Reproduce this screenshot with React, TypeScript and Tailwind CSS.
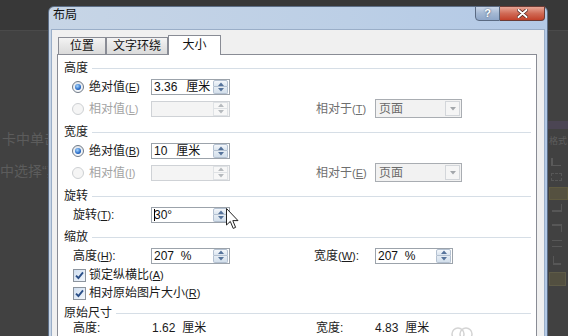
import React from "react";

function Mn({ k }: { k: string }) {
  return (
    <span className="text-[11px]">
      (<span className="underline underline-offset-1">{k}</span>)
    </span>
  );
}

function Up({ c }: { c: string }) {
  return (
    <svg width="6" height="4" viewBox="0 0 6 4">
      <path d="M0 4 L3 0.5 L6 4 Z" fill={c} />
    </svg>
  );
}
function Down({ c }: { c: string }) {
  return (
    <svg width="6" height="4" viewBox="0 0 6 4">
      <path d="M0 0 L3 3.5 L6 0 Z" fill={c} />
    </svg>
  );
}

function Spin({ disabled }: { disabled?: boolean }) {
  if (disabled) {
    return (
      <div className="ml-auto mr-px flex flex-col w-[15px] h-[14px]">
        <div className="h-[7px] flex items-center justify-center border border-[#dfe2e5] bg-[#f7f7f7]">
          <Up c="#b6babe" />
        </div>
        <div className="h-[7px] flex items-center justify-center border border-t-0 border-[#dfe2e5] bg-[#f7f7f7]">
          <Down c="#b6babe" />
        </div>
      </div>
    );
  }
  return (
    <div className="ml-auto mr-px flex flex-col w-[15px] h-[14px]">
      <div className="h-[7px] flex items-center justify-center border border-[#b4c1d1] bg-[linear-gradient(#f4f7fb,#dbe5ef)] rounded-t-[2px]">
        <Up c="#56739b" />
      </div>
      <div className="h-[7px] flex items-center justify-center border border-t-0 border-[#b4c1d1] bg-[linear-gradient(#e6edf4,#d3dfeb)] rounded-b-[2px]">
        <Down c="#56739b" />
      </div>
    </div>
  );
}

function Val({ num, unit }: { num: string; unit?: string }) {
  return (
    <span className="whitespace-pre text-[12px] leading-none text-[#111]">
      {num}
      {unit && <span className="ml-[9px]">{unit}</span>}
    </span>
  );
}

function NumInput({
  num,
  unit,
  disabled,
  caret,
  wide,
}: {
  num?: string;
  unit?: string;
  disabled?: boolean;
  caret?: boolean;
  wide?: boolean;
}) {
  return (
    <div
      className={
        (wide ? "w-[79px] " : "w-[78px] ") +
        (disabled
          ? "border-[#cfd2d6] bg-[#f4f4f4] "
          : "border-[#9ca3ab] bg-white ") +
        "flex items-center h-[16px] border pl-[2px]"
      }
    >
      {caret && <div className="w-px h-[12px] bg-black mr-[-1px]" />}
      {num && <Val num={num} unit={unit} />}
      <Spin disabled={disabled} />
    </div>
  );
}

function Select() {
  return (
    <div className="w-[87px] h-[19px] border border-[#a9adb2] bg-[#f2f2f2] flex items-center">
      <span className="pl-[3px] flex-1 text-[12px] leading-none text-[#6a6a6a]">
        页面
      </span>
      <div className="w-[15px] h-[15px] mr-px border border-[#d3d6da] bg-[#f5f5f5] flex items-center justify-center">
        <Down c="#a3a7ab" />
      </div>
    </div>
  );
}

function Radio({ checked }: { checked?: boolean }) {
  return checked ? (
    <div className="w-[12px] h-[12px] rounded-full border border-[#6f7986] bg-[linear-gradient(#e3e8ee,#f6f8fa)] flex items-center justify-center">
      <div className="w-[6px] h-[6px] rounded-full bg-[radial-gradient(circle_at_40%_35%,#a8d8ff,#2063c2_65%,#0e3b82)]" />
    </div>
  ) : (
    <div className="w-[12px] h-[12px] rounded-full border border-[#cdd0d3] bg-[#f5f5f5]" />
  );
}

function Check() {
  return (
    <div className="w-[13px] h-[13px] border border-[#8c949e] bg-[linear-gradient(135deg,#cfdef0,#f3f7fc)] flex items-center justify-center">
      <svg width="9" height="9" viewBox="0 0 9 9">
        <path
          d="M1 4.6 L3.4 7 L8 1.4"
          fill="none"
          stroke="#2a4f88"
          strokeWidth="1.9"
        />
      </svg>
    </div>
  );
}

function Heading({ text, mt }: { text: string; mt: string }) {
  return (
    <div className={"flex items-center h-[16px] " + mt}>
      <span className="text-[12px] leading-none text-[#1b1b1b]">{text}</span>
      <div className="flex-1 h-px bg-[#d6dee6] ml-[4px]" />
    </div>
  );
}

function Tab({
  label,
  selected,
  w,
}: {
  label: string;
  selected?: boolean;
  w: string;
}) {
  if (selected) {
    return (
      <div
        className={
          w +
          " h-[20px] border border-b-0 border-[#898c95] bg-white flex items-center justify-center text-[12px] leading-none text-[#111] pb-[2px]"
        }
      >
        {label}
      </div>
    );
  }
  return (
    <div
      className={
        w +
        " h-[17px] mb-px border border-b-0 border-[#898c95] bg-[linear-gradient(#f4f4f4,#e6e6e6_50%,#dadada)] flex items-center justify-center text-[12px] leading-none text-[#111]"
      }
    >
      {label}
    </div>
  );
}

const dis = "text-[#a3a3a3]";
const dis2 = "text-[#6e6e6e]";

export default function App() {
  return (
    <div className="relative w-[568px] h-[336px] overflow-hidden bg-[#414141] font-['Liberation_Sans','Noto_Sans_CJK_SC',sans-serif]">
      {/* desktop / document behind */}
      <div className="absolute left-0 top-0 w-[568px] h-[31px] bg-[#383838] border-b border-[#4a4a4a]" />
      <div className="absolute left-[2px] top-[132px] text-[14px] leading-none text-[#5c5c5c] whitespace-nowrap">
        卡中单击
      </div>
      <div className="absolute left-0 top-[164px] text-[14px] leading-none text-[#5c5c5c] whitespace-nowrap">
        中选择“其
      </div>
      {/* right side ribbon remnants */}
      <div className="absolute left-[548px] top-[121px] w-[20px] h-[8px] bg-[#4b4553]" />
      <div className="absolute left-[549px] top-[137px] text-[9px] leading-none text-[#5e5e5e] whitespace-nowrap">
        格式
      </div>
      <div className="absolute left-[551px] top-[158px] w-[10px] h-[8px] border-l-2 border-b border-[#5a5a5a]" />
      <div className="absolute left-[551px] top-[173px] w-[11px] h-[8px] border border-dashed border-[#575757]" />
      <div className="absolute left-[549px] top-[187px] w-[19px] h-[13px] bg-[#555140] border border-[#5f5a40]" />
      <div className="absolute left-[552px] top-[204px] w-[10px] h-[8px] border-b-2 border-r border-[#575757]" />
      <div className="absolute left-[552px] top-[224px] w-[10px] h-[8px] border-t-2 border-r border-[#575757]" />
      <div className="absolute left-[552px] top-[240px] w-[10px] h-[7px] border-y border-[#575757]" />
      <div className="absolute left-[553px] top-[256px] w-[8px] h-[9px] border-b-2 border-l border-[#575757]" />
      <div className="absolute left-[549px] top-[272px] w-[17px] h-[14px] bg-[#524f40] border border-[#5e5b48]" />

      {/* dialog window */}
      <div className="absolute left-[48px] top-[6px] w-[500px] h-[340px] border border-[#5d6e86] rounded-t-[6px] bg-[linear-gradient(90deg,#c7d5e6,#bccfe6_60%,#b3c9e6)] px-[2px] flex flex-col">
        {/* title bar */}
        <div className="h-[22px] flex justify-between">
          <div className="pl-[2px] pt-[2px] text-[12px] leading-[12px] text-[#111]">
            布局
          </div>
          <div className="flex -mt-px">
            <div className="w-[25px] h-[15px] border border-[#5a6a82] rounded-bl-[4px] bg-[linear-gradient(#c9d6e8,#a4b8d3_50%,#8ea6c8)] flex items-center justify-center text-[11px] font-bold leading-none text-white [text-shadow:0_0_2px_#33445c]">
              ?
            </div>
            <div className="w-[45px] h-[15px] border border-l-0 border-[#6b3b35] rounded-br-[4px] bg-[linear-gradient(#e8a595,#d06a55_50%,#c2412a)] flex items-center justify-center">
              <svg width="11" height="9" viewBox="0 0 11 9">
                <path
                  d="M1.5 1 L9.5 8 M9.5 1 L1.5 8"
                  stroke="#4a1d18"
                  strokeWidth="3.4"
                  strokeLinecap="round"
                />
                <path
                  d="M1.5 1 L9.5 8 M9.5 1 L1.5 8"
                  stroke="#ffffff"
                  strokeWidth="2"
                  strokeLinecap="round"
                />
              </svg>
            </div>
          </div>
        </div>

        {/* client area */}
        <div className="flex-1 bg-[#f0f0f0] border border-[#9aaec8] pl-[5px] pr-[7px] pt-[5px] flex flex-col">
          <div className="relative z-10 flex items-end h-[20px] pl-px">
            <Tab label="位置" w="w-[48px]" />
            <Tab label="文字环绕" w="w-[62px]" />
            <Tab label="大小" w="w-[53px]" selected />
          </div>
          <div className="-mt-px flex-1 border border-[#898c95] bg-white pl-[6px] pr-[5px] flex flex-col text-[12px] leading-none text-[#1b1b1b]">
            {/* 高度 */}
            <Heading text="高度" mt="mt-[5px]" />
            <div className="flex items-center h-[22px]">
              <div className="ml-[8px] w-[12px]">
                <Radio checked />
              </div>
              <div className="ml-[5px] w-[62px] whitespace-nowrap">
                绝对值<Mn k="E" />
              </div>
              <NumInput num="3.36" unit="厘米" wide />
            </div>
            <div className="flex items-center h-[21px]">
              <div className="ml-[8px] w-[12px]">
                <Radio />
              </div>
              <div className={"ml-[5px] w-[62px] whitespace-nowrap " + dis}>
                相对值<Mn k="L" />
              </div>
              <NumInput disabled wide />
              <div className="w-[86px]" />
              <div className={"w-[59px] whitespace-nowrap " + dis2}>
                相对于<Mn k="T" />
              </div>
              <Select />
            </div>

            {/* 宽度 */}
            <Heading text="宽度" mt="mt-[5px]" />
            <div className="flex items-center h-[22px]">
              <div className="ml-[8px] w-[12px]">
                <Radio checked />
              </div>
              <div className="ml-[5px] w-[62px] whitespace-nowrap">
                绝对值<Mn k="B" />
              </div>
              <NumInput num="10" unit="厘米" wide />
            </div>
            <div className="flex items-center h-[21px]">
              <div className="ml-[8px] w-[12px]">
                <Radio />
              </div>
              <div className={"ml-[5px] w-[62px] whitespace-nowrap " + dis}>
                相对值<Mn k="I" />
              </div>
              <NumInput disabled wide />
              <div className="w-[86px]" />
              <div className={"w-[59px] whitespace-nowrap " + dis2}>
                相对于<Mn k="E" />
              </div>
              <Select />
            </div>

            {/* 旋转 */}
            <Heading text="旋转" mt="mt-[5px]" />
            <div className="flex items-center h-[22px]">
              <div className="ml-[9px] w-[78px] whitespace-nowrap">
                旋转<Mn k="T" />:
              </div>
              <NumInput num="30°" caret wide />
            </div>

            {/* 缩放 */}
            <Heading text="缩放" mt="mt-[3px]" />
            <div className="flex items-center h-[21px]">
              <div className="ml-[9px] w-[78px] whitespace-nowrap">
                高度<Mn k="H" />:
              </div>
              <NumInput num="207  %" wide />
              <div className="w-[84px]" />
              <div className="w-[61px] whitespace-nowrap">
                宽度<Mn k="W" />:
              </div>
              <NumInput num="207  %" />
            </div>
            <div className="flex items-center h-[18px]">
              <div className="ml-[9px]">
                <Check />
              </div>
              <div className="ml-[3px] whitespace-nowrap">
                锁定纵横比<Mn k="A" />
              </div>
            </div>
            <div className="flex items-center h-[18px]">
              <div className="ml-[9px]">
                <Check />
              </div>
              <div className="ml-[3px] whitespace-nowrap">
                相对原始图片大小<Mn k="R" />
              </div>
            </div>

            {/* 原始尺寸 */}
            <Heading text="原始尺寸" mt="mt-[3px]" />
            <div className="flex items-center h-[14px]">
              <div className="ml-[9px] w-[79px] whitespace-nowrap">高度:</div>
              <div className="w-[164px] whitespace-pre">
                1.62<span className="ml-[7px]">厘米</span>
              </div>
              <div className="w-[59px] whitespace-nowrap">宽度:</div>
              <div className="whitespace-pre">
                4.83<span className="ml-[7px]">厘米</span>
              </div>
            </div>
          </div>
        </div>
      </div>

      {/* faint watermark */}
      <svg
        className="absolute left-[450px] top-[325px]"
        width="24"
        height="14"
        viewBox="0 0 24 14"
      >
        <circle cx="8" cy="9" r="6" fill="none" stroke="#d4d4d4" strokeWidth="1.5" />
        <circle cx="16" cy="9" r="6" fill="none" stroke="#d4d4d4" strokeWidth="1.5" />
      </svg>

      {/* mouse pointer */}
      <svg
        className="absolute left-[226px] top-[208px]"
        width="14"
        height="23"
        viewBox="0 0 14 23"
      >
        <path
          d="M0.5 0.5 L0.5 17 L4.3 13.4 L7.2 20.4 L9.6 19.4 L6.8 12.6 L12 12.6 Z"
          fill="#ffffff"
          stroke="#222"
          strokeWidth="1"
          strokeLinejoin="round"
        />
      </svg>
    </div>
  );
}
